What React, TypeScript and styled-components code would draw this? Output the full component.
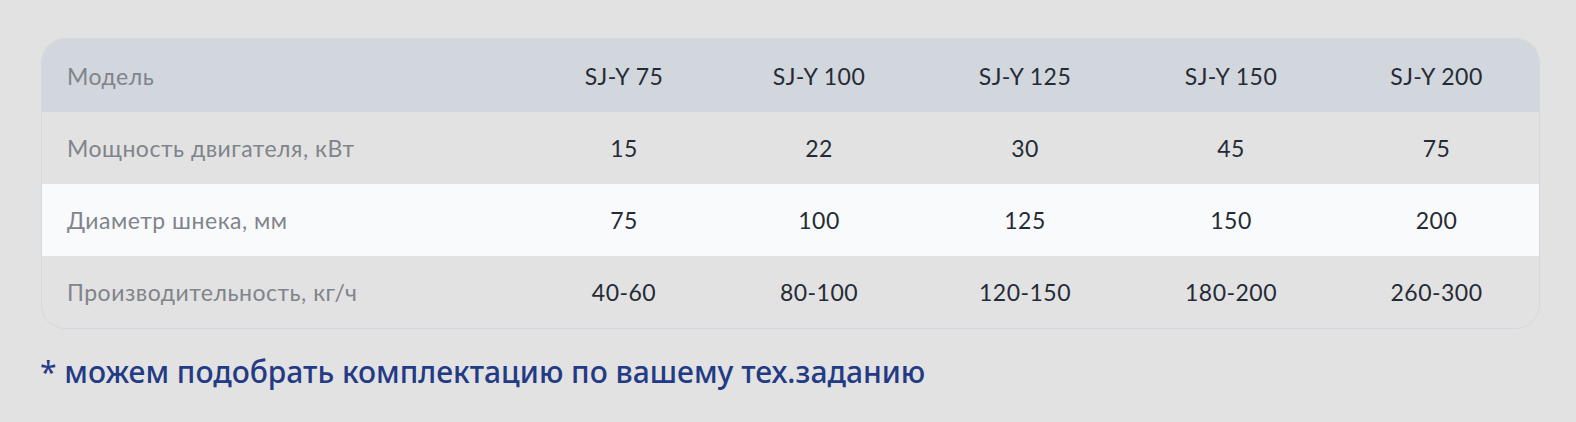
import React from "react";
import styled, { createGlobalStyle } from "styled-components";

const GlobalStyle = createGlobalStyle`
  html, body {
    margin: 0;
    padding: 0;
    background: #e2e2e2;
  }
  body {
    font-family: Lato, "Noto Sans", sans-serif;
  }
`;

const Page = styled.div`
  padding: 38px 36px 0 41px;
  box-sizing: border-box;
  width: 1576px;
  height: 422px;
`;

const Table = styled.div`
  border: 1px solid #d3d8e0;
  border-radius: 24px;
  overflow: hidden;
`;

const Row = styled.div<{ $bg?: string; $head?: boolean }>`
  display: grid;
  grid-template-columns: 490px 184px 206px 206px 206px 1fr;
  height: ${(p) => (p.$head ? 73 : 72)}px;
  align-items: center;
  background: ${(p) => p.$bg || "transparent"};
`;

const Label = styled.div`
  padding-left: 25px;
  font-size: 23px;
  letter-spacing: 0.5px;
  color: #80848b;
`;

const Cell = styled.div`
  text-align: center;
  font-size: 23px;
  letter-spacing: 0.5px;
  color: #252b36;
`;

const Note = styled.p`
  margin: 22px 0 0 -1px;
  font-family: "Noto Sans", sans-serif;
  font-weight: 500;
  font-size: 30px;
  color: #233a85;

  span {
    font-weight: 400;
  }
`;

const models = ["SJ-Y 75", "SJ-Y 100", "SJ-Y 125", "SJ-Y 150", "SJ-Y 200"];

const rows = [
  { label: "Мощность двигателя, кВт", values: ["15", "22", "30", "45", "75"] },
  { label: "Диаметр шнека, мм", values: ["75", "100", "125", "150", "200"], bg: "#f9fafb" },
  {
    label: "Производительность, кг/ч",
    values: ["40-60", "80-100", "120-150", "180-200", "260-300"],
  },
];

export default function App() {
  return (
    <>
      <GlobalStyle />
      <Page>
        <Table>
          <Row $bg="#d2d6dd" $head>
            <Label>Модель</Label>
            {models.map((m) => (
              <Cell key={m}>{m}</Cell>
            ))}
          </Row>
          {rows.map((r) => (
            <Row key={r.label} $bg={r.bg}>
              <Label>{r.label}</Label>
              {r.values.map((v, i) => (
                <Cell key={i}>{v}</Cell>
              ))}
            </Row>
          ))}
        </Table>
        <Note>
          <span>*</span> можем подобрать комплектацию по вашему тех.заданию
        </Note>
      </Page>
    </>
  );
}
